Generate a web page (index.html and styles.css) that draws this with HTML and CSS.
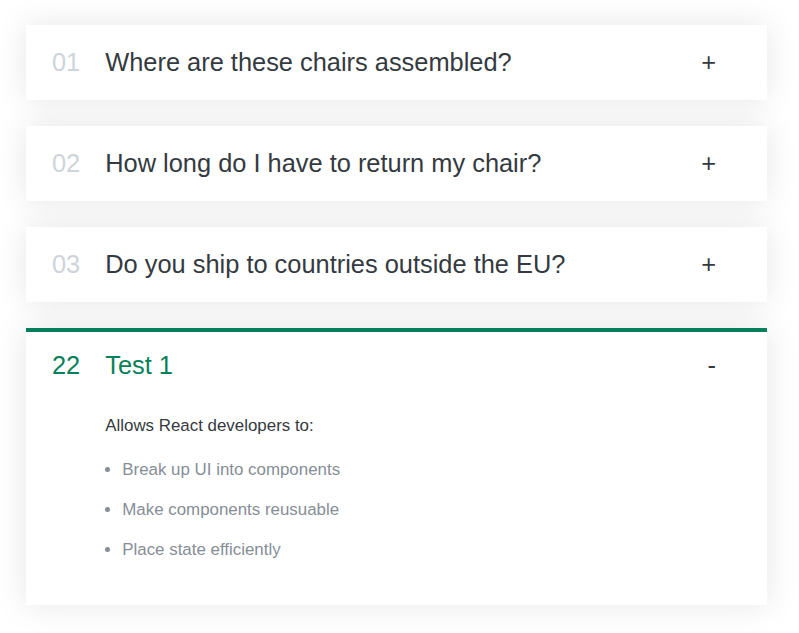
FILE: index.html
```
<!DOCTYPE html>
<html lang="en">
<head>
<meta charset="utf-8">
<title>Accordion</title>
<link rel="stylesheet" href="styles.css">
</head>
<body>
<div class="accordion">
  <div class="item">
    <p class="number">01</p>
    <p class="title">Where are these chairs assembled?</p>
    <p class="icon">+</p>
  </div>
  <div class="item">
    <p class="number">02</p>
    <p class="title">How long do I have to return my chair?</p>
    <p class="icon">+</p>
  </div>
  <div class="item">
    <p class="number">03</p>
    <p class="title">Do you ship to countries outside the EU?</p>
    <p class="icon">+</p>
  </div>
  <div class="item open">
    <p class="number">22</p>
    <p class="title">Test 1</p>
    <p class="icon">-</p>
    <div class="content-box">
      <p class="lead">Allows React developers to:</p>
      <ul class="points">
        <li>Break up UI into components</li>
        <li>Make components reusuable</li>
        <li>Place state efficiently</li>
      </ul>
    </div>
  </div>
</div>
</body>
</html>
```

FILE: styles.css
```
* {
  margin: 0;
  padding: 0;
  box-sizing: border-box;
}

body {
  font-family: "Liberation Sans", Arial, sans-serif;
  color: #343a40;
  background: #fff;
}

.accordion {
  width: 741px;
  margin: 25px 0 40px 26px;
  display: flex;
  flex-direction: column;
  gap: 26px;
}

.item {
  background: #fff;
  box-shadow: 0 0 32px rgba(0, 0, 0, 0.1);
  padding: 19px 51px 19px 26px;
  border-top: 4px solid #fff;
  border-bottom: 4px solid #fff;
  display: grid;
  grid-template-columns: auto 1fr auto;
  column-gap: 25px;
  row-gap: 32px;
  align-items: center;
}

.number,
.title,
.icon {
  font-size: 25.4px;
  line-height: 29px;
}

.number {
  color: #ced4da;
}

.title {
  color: #343a40;
}

.icon {
  color: #343a40;
}

.open {
  border-top-color: #087f5b;
}

.open .number,
.open .title {
  color: #087f5b;
}

.content-box {
  grid-column: 2 / -1;
  padding-bottom: 18.5px;
  font-size: 16.9px;
}

.lead {
  line-height: 27px;
  margin-bottom: 17px;
  color: #343a40;
}

.points {
  color: #868e96;
  padding-left: 17px;
  display: flex;
  flex-direction: column;
  gap: 13px;
}

.points li {
  line-height: 27px;
}
```
